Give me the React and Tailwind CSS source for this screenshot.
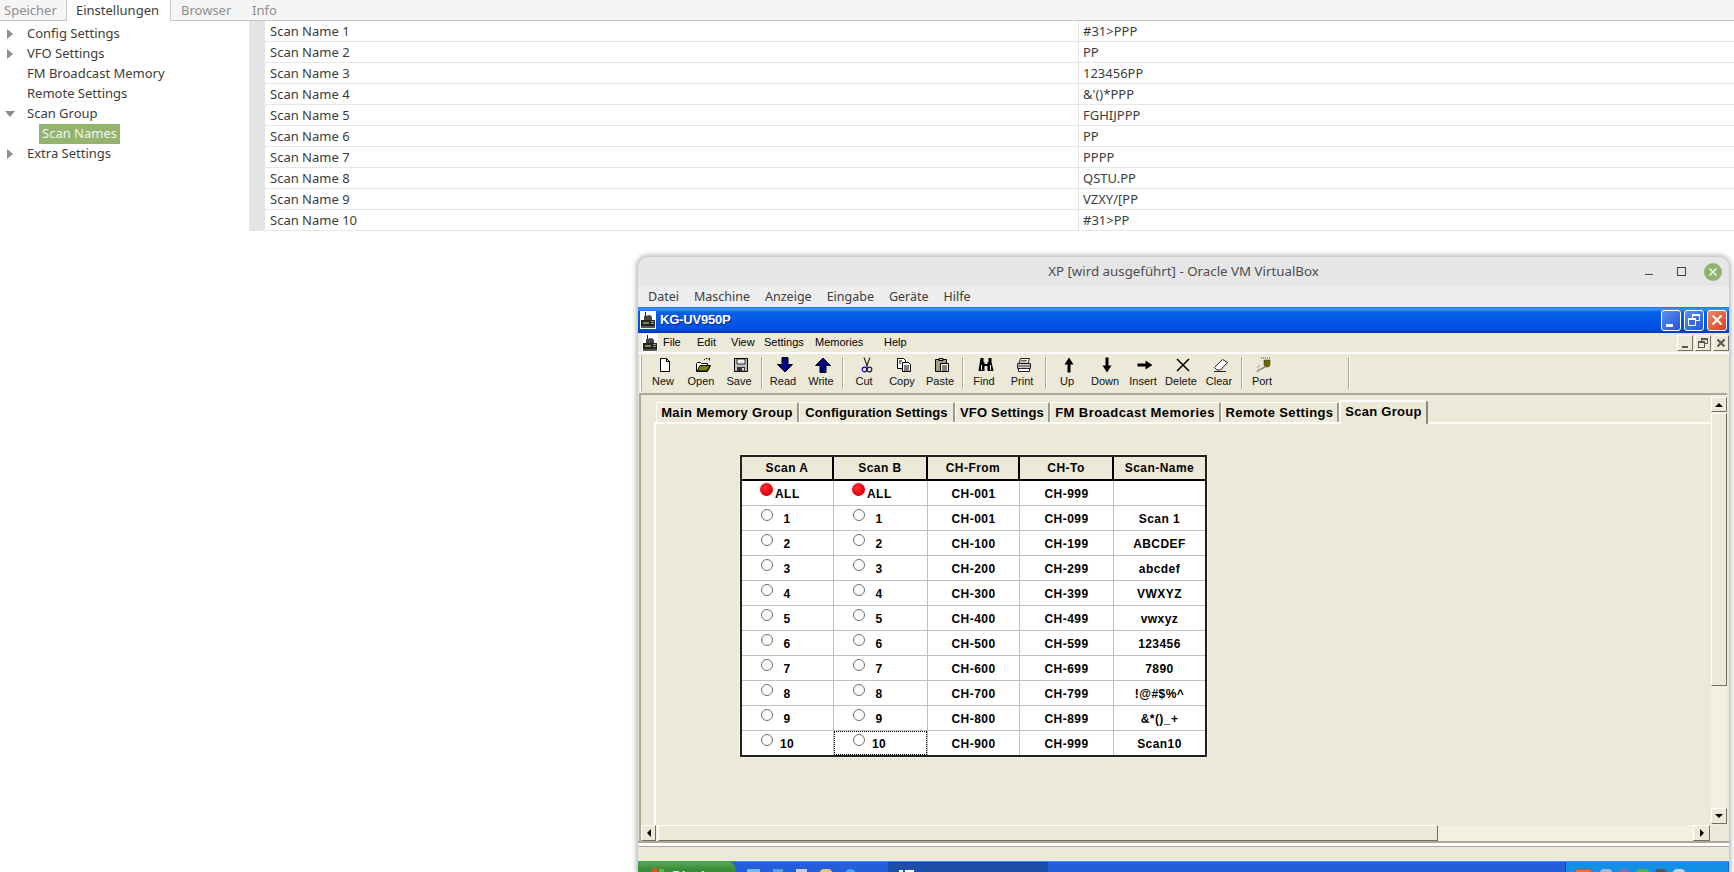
import React from "react";

const UI = "[font-family:'Noto_Sans',sans-serif]";
const XP = "[font-family:'Liberation_Sans',Arial,sans-serif]";

const Logo = () => (
  <svg width="16" height="18" viewBox="0 0 16 18" className="block bg-white">
    <path d="M5 1h1v4H5z" fill="#222" />
    <path d="M4 5l6-1 2 2v3H4z" fill="#444" />
    <path d="M1 9h14v6H1z" fill="#222" />
    <path d="M3 11h6v2H3z" fill="#7f8a3a" />
    <path d="M11 10h3v1h-3zM11 12h3v1h-3z" fill="#999" />
    <path d="M1 15h14v2H1z" fill="#555" />
  </svg>
);

const Icon = ({ children }) => (
  <svg width="18" height="16" viewBox="0 0 18 16" className="block ml-[3px]">
    {children}
  </svg>
);

const icons = {
  New: (
    <Icon>
      <path d="M4.5 1.5h6l3 3v10h-9z" fill="#fff" stroke="#000" />
      <path d="M10.5 1.5v3h3" fill="none" stroke="#000" />
    </Icon>
  ),
  Open: (
    <Icon>
      <path d="M2.5 6.5v8h11l3-6h-3v-2h-6l-1-1h-3z" fill="#fff" stroke="#000" />
      <path d="M3 14l3-5.500h10l-3 5.500z" fill="#808000" stroke="#000" />
      <path d="M10 3l2-1.500h2l1.500 1.500M15.500 1v3" fill="none" stroke="#000" strokeDasharray="1.500 1" />
    </Icon>
  ),
  Save: (
    <Icon>
      <path d="M2.500 1.500h13v13h-13z" fill="#c0c0c0" stroke="#000" />
      <path d="M5 2h8v5H5z" fill="#efefef" stroke="#000" strokeWidth="0.800" />
      <path d="M5 10h8v4.500H5z" fill="#333" />
      <path d="M10 11h2v2.500h-2z" fill="#ddd" />
    </Icon>
  ),
  Read: (
    <Icon>
      <path d="M6 0.500h6v7h4.500L9 15 1.500 7.500H6z" fill="#000080" stroke="#000" />
    </Icon>
  ),
  Write: (
    <Icon>
      <path d="M6 15.500h6v-7h4.500L9 1 1.500 8.500H6z" fill="#000080" stroke="#000" />
    </Icon>
  ),
  Cut: (
    <Icon>
      <path d="M7 0.500l3.500 9M13 0.500l-3.500 9" stroke="#000" fill="none" />
      <circle cx="7.500" cy="12.500" r="2.300" fill="none" stroke="#0000c0" strokeWidth="1.200" />
      <circle cx="12.500" cy="12.500" r="2.300" fill="none" stroke="#222" strokeWidth="1.200" />
    </Icon>
  ),
  Copy: (
    <Icon>
      <path d="M2.500 1.500h6l2 2v8h-8z" fill="#fff" stroke="#000" />
      <path d="M7.500 5.500h6l2 2v7h-8z" fill="#fff" stroke="#000" />
      <path d="M4 4h3M4 6h2M9 9h5M9 11h5M9 13h5" stroke="#000" />
    </Icon>
  ),
  Paste: (
    <Icon>
      <path d="M2.500 2.500h11v12h-11z" fill="#a0a080" stroke="#000" />
      <path d="M6 1.500h4v2H6z" fill="#c0c0c0" stroke="#000" />
      <path d="M7.500 6.500h8v8h-8z" fill="#fff" stroke="#000" />
      <path d="M9 9h5M9 11h5M9 13h5" stroke="#000" />
    </Icon>
  ),
  Find: (
    <Icon>
      <path d="M3.500 1h3v4h1v2h3V5h1V1h3v4l2 9h-6V9h-3v5H1.500z" fill="#000" />
      <path d="M4 8h1v5H4zM13 8h1v5h-1z" fill="#fff" />
    </Icon>
  ),
  Print: (
    <Icon>
      <path d="M5.500 1.500h9l-1.500 5h-9z" fill="#fff" stroke="#222" />
      <path d="M6 3.500h6M5.500 5h6" stroke="#666" />
      <path d="M2.500 6.500h13v5h-13z" fill="#c8c8c8" stroke="#222" />
      <path d="M3.500 11.500h11v3h-11z" fill="#fff" stroke="#222" />
      <path d="M3 9h12" stroke="#444" />
    </Icon>
  ),
  Up: (
    <Icon>
      <path d="M9 0.500l4.500 7H10.500v8h-3v-8H4.500z" fill="#000" />
    </Icon>
  ),
  Down: (
    <Icon>
      <path d="M9 15.500l4.500-7H10.500v-8h-3v8H4.500z" fill="#000" />
    </Icon>
  ),
  Insert: (
    <Icon>
      <path d="M16.500 8l-7-4.500V6.500H1.500v3h8v3z" fill="#000" />
    </Icon>
  ),
  Delete: (
    <Icon>
      <path d="M3 2l12 12M15 2L3 14" stroke="#000" strokeWidth="1.500" fill="none" />
    </Icon>
  ),
  Clear: (
    <Icon>
      <path d="M2.500 10.500l8-8 5 3-7 7.500H5z" fill="#fff" stroke="#222" />
      <path d="M2 14.500h12" stroke="#222" />
    </Icon>
  ),
  Port: (
    <Icon>
      <path d="M6 1h10" stroke="#999" strokeDasharray="1 1" strokeWidth="2" />
      <path d="M9 3h6v5l-1.500 2h-3L9 8z" fill="#6b6b00" stroke="#333" strokeWidth="0.500" />
      <path d="M10 10L3 13.500l-1 1.500" stroke="#888" strokeWidth="1.500" fill="none" />
      <path d="M5 8L2 11" stroke="#bbb" strokeWidth="1.500" />
    </Icon>
  ),
};

const toolbar = [
  { items: ["New", "Open", "Save"], sep: "ml-[3px] mr-[2px]" },
  { items: ["Read", "Write"], sep: "ml-[2px] mr-[2px]" },
  { items: ["Cut", "Copy", "Paste"], sep: "ml-[3px] mr-[2px]" },
  { items: ["Find", "Print"], sep: "ml-[4px] mr-[2px]" },
  { items: ["Up", "Down", "Insert", "Delete", "Clear"], sep: "ml-[3px] mr-[1px]" },
  { items: ["Port"], sep: "ml-[67px]" },
];

const sideRows = [
  ["r", "Config Settings"],
  ["r", "VFO Settings"],
  ["", "FM Broadcast Memory"],
  ["", "Remote Settings"],
  ["d", "Scan Group"],
  ["s", "Scan Names"],
  ["r", "Extra Settings"],
];

const scanValues = ["#31>PPP", "PP", "123456PP", "&'()*PPP", "FGHIJPPP", "PP", "PPPP", "QSTU.PP", "VZXY/[PP", "#31>PP"];

const scanRows = [
  ["ALL", "CH-001", "CH-999", ""],
  ["1", "CH-001", "CH-099", "Scan 1"],
  ["2", "CH-100", "CH-199", "ABCDEF"],
  ["3", "CH-200", "CH-299", "abcdef"],
  ["4", "CH-300", "CH-399", "VWXYZ"],
  ["5", "CH-400", "CH-499", "vwxyz"],
  ["6", "CH-500", "CH-599", "123456"],
  ["7", "CH-600", "CH-699", "7890"],
  ["8", "CH-700", "CH-799", "!@#$%^"],
  ["9", "CH-800", "CH-899", "&*()_+"],
  ["10", "CH-900", "CH-999", "Scan10"],
];

const classicBtn = "bg-[#ece9d8] border border-t-white border-l-white border-r-[#716f64] border-b-[#716f64]";

const Radio = ({ on }) =>
  on ? (
    <span className="mt-[2px] ml-[18px] w-[13px] h-[13px] shrink-0 rounded-full bg-[radial-gradient(circle_at_40%_35%,#ff3030,#dd0010_65%,#a8000c)]" />
  ) : (
    <span className="mt-[3px] ml-[19px] w-[12px] h-[12px] shrink-0 rounded-full border border-[#6f6f6f] bg-[#fbfbf8]" />
  );

const ScanCell = ({ row, last, focus }) => (
  <div className={`relative flex ${last ? "h-[24px]" : "h-[25px] border-b border-b-[#c0c0c0]"} border-r border-r-[#c0c0c0]`}>
    <Radio on={row[0] === "ALL"} />
    <span className="self-center pt-px w-[24px] ml-[2px] text-center whitespace-nowrap">{row[0]}</span>
    {focus && <span className="absolute inset-0 border border-dotted border-black" />}
  </div>
);

const TextCell = ({ text, last, end }) => (
  <div className={`flex items-center justify-center pt-px ${last ? "h-[24px]" : "h-[25px] border-b border-b-[#c0c0c0]"} ${end ? "" : "border-r border-r-[#c0c0c0]"}`}>
    {text}
  </div>
);

const tabs = [
  ["Main Memory Group", "w-[143px] tracking-[0.35px]"],
  ["Configuration Settings", "w-[156px] tracking-[0.1px]"],
  ["VFO Settings", "w-[95px] tracking-[0.2px]"],
  ["FM Broadcast Memories", "w-[171px] tracking-[0.45px]"],
  ["Remote Settings", "w-[118px] tracking-[0.35px]"],
];

export default function App() {
  return (
    <div className={`relative w-[1734px] h-[872px] overflow-hidden bg-white ${UI}`}>
      {/* background application */}
      <div className="flex flex-col">
        <div className="flex h-[21px] bg-[#f5f5f5] border-b border-b-[#c6c6c6] text-[13px] leading-[20px] text-[#8e8e8e]">
          <span className="ml-[4px] w-[62px]">Speicher</span>
          <span className="w-[105px] h-[21px] pl-[9px] bg-white border-x border-x-[#c6c6c6] text-[#3c3c3c]">Einstellungen</span>
          <span className="ml-[10px] w-[71px]">Browser</span>
          <span>Info</span>
        </div>
        <div className="flex">
          <div className="w-[249px] flex flex-col pt-[3px] text-[13px] text-[#3c3c3c]">
            {sideRows.map(([k, label]) => (
              <div key={label} className="flex items-center h-[20px]">
                {k === "r" && <span className="ml-[7px] w-0 h-0 border-y-[5px] border-y-transparent border-l-[6px] border-l-[#8c8c8c]" />}
                {k === "d" && <span className="ml-[5px] w-0 h-0 border-x-[5px] border-x-transparent border-t-[6px] border-t-[#8c8c8c]" />}
                {k === "" && <span className="ml-[13px]" />}
                {k === "s" ? (
                  <span className="ml-[39px] h-[20px] leading-[19px] px-[3px] bg-[#93b36e] text-[#f2f6ec]">{label}</span>
                ) : (
                  <span className={k === "d" ? "ml-[12px]" : "ml-[14px]"}>{label}</span>
                )}
              </div>
            ))}
          </div>
          <div className="flex-1 border-l-[16px] border-l-[#e4e4e4] text-[13px] text-[#3c3c3c]">
            {scanValues.map((v, i) => (
              <div key={i} className="grid grid-cols-[814px_1fr] h-[21px] leading-[20px] border-b border-b-[#e6e6e6]">
                <span className="pl-[5px] border-r border-r-[#e6e6e6]">Scan Name {i + 1}</span>
                <span className="pl-[4px]">{v}</span>
              </div>
            ))}
          </div>
        </div>
      </div>

      {/* VirtualBox window */}
      <div className="absolute left-[638px] top-[257px] w-[1091px] h-[615px] flex flex-col rounded-t-[10px] overflow-hidden bg-[#e6e6e6] shadow-[0_0_5px_2px_rgba(0,0,0,0.28)]">
        <div className="grid grid-cols-[1fr_auto_1fr] items-center h-[29px] shrink-0 text-[13.3px] text-[#4d4d4d]">
          <span />
          <span>XP [wird ausgeführt] - Oracle VM VirtualBox</span>
          <div className="flex justify-end items-center text-[#444]">
            <span className="w-[32px] flex justify-center"><span className="w-[8px] h-px mt-[6px] bg-[#444]" /></span>
            <span className="w-[32px] flex justify-center"><span className="w-[9px] h-[9px] border border-[#444]" /></span>
            <span className="w-[32px] flex justify-center">
              <span className="w-[18px] h-[18px] rounded-full bg-[#8fb26e] flex items-center justify-center">
                <svg width="10" height="10" viewBox="0 0 10 10"><path d="M1.500 1.500l7 7M8.500 1.500l-7 7" stroke="#fff" strokeWidth="1.300" /></svg>
              </span>
            </span>
          </div>
        </div>
        <div className="flex items-center h-[21px] pt-px shrink-0 pl-[3px] bg-[#eeeeee] text-[12.5px] text-[#3c3c3c]">
          {["Datei", "Maschine", "Anzeige", "Eingabe", "Geräte", "Hilfe"].map((m) => (
            <span key={m} className="px-[7px] mr-px">{m}</span>
          ))}
        </div>

        {/* XP caption */}
        <div className={`flex items-center h-[26px] shrink-0 pl-[2px] pr-[2px] bg-[linear-gradient(#1f6ff0_0%,#3d95ff_8%,#0a5fe8_20%,#0055e5_60%,#0050dd_85%,#0034b8_100%)] ${XP}`}>
          <Logo />
          <span className="ml-[4px] text-[13px] font-bold tracking-[-0.2px] text-white [text-shadow:1px_1px_0_#0a2a8a]">KG-UV950P</span>
          <div className="ml-auto flex gap-[3px]">
            <span className="relative w-[20px] h-[21px] rounded-[3px] border border-white bg-[linear-gradient(135deg,#5a8ff0,#2456d8)]">
              <span className="absolute left-[4px] bottom-[3px] w-[7px] h-[3px] bg-white" />
            </span>
            <span className="relative w-[20px] h-[21px] rounded-[3px] border border-white bg-[linear-gradient(135deg,#5a8ff0,#2456d8)]">
              <span className="absolute left-[7px] top-[3px] w-[8px] h-[7px] border border-white border-t-2" />
              <span className="absolute left-[3px] top-[7px] w-[8px] h-[8px] border border-white border-t-2 bg-[#3a6ae0]" />
            </span>
            <span className="flex items-center justify-center w-[20px] h-[21px] rounded-[3px] border border-white bg-[linear-gradient(135deg,#ee8a68,#d8411c)]">
              <svg width="12" height="12" viewBox="0 0 12 12"><path d="M1.500 1.500l9 9M10.500 1.500l-9 9" stroke="#fff" strokeWidth="2" /></svg>
            </span>
          </div>
        </div>

        {/* XP body */}
        <div className={`flex-1 flex flex-col bg-[#ece9d8] ${XP} text-black`}>
          <div className="flex items-center h-[19px] shrink-0 pl-[4px] text-[11px]">
            <Logo />
            <span className="ml-[5px] w-[34px]">File</span>
            <span className="w-[34px]">Edit</span>
            <span className="w-[33px]">View</span>
            <span className="w-[51px]">Settings</span>
            <span className="w-[69px]">Memories</span>
            <span>Help</span>
            <div className="ml-auto flex gap-[2px] text-[#555]">
              <span className={`relative w-[16px] h-[16px] ${classicBtn}`}><span className="absolute left-[4px] bottom-[2px] w-[6px] h-[2px] bg-[#555]" /></span>
              <span className={`relative w-[16px] h-[16px] ${classicBtn}`}>
                <span className="absolute left-[5px] top-[2px] w-[7px] h-[6px] border border-[#555] border-t-2" />
                <span className="absolute left-[2px] top-[5px] w-[7px] h-[7px] border border-[#555] border-t-2 bg-[#ece9d8]" />
              </span>
              <span className={`flex items-center justify-center w-[16px] h-[16px] ${classicBtn}`}>
                <svg width="10" height="10" viewBox="0 0 10 10"><path d="M1.500 1.500l7 7M8.500 1.500l-7 7" stroke="#555" strokeWidth="2" /></svg>
              </span>
            </div>
          </div>
          <div className="h-[2px] shrink-0 bg-white" />

          {/* toolbar */}
          <div className="flex h-[39px] shrink-0 pl-[2px] text-[11px] text-[#111]">
            <span className="w-[2px] mt-[2px] h-[35px] border-l border-l-white border-r border-r-[#aca899]" />
            <span className="w-[2px]" />
            {toolbar.map((g, i) => (
              <React.Fragment key={i}>
                {g.items.map((it) => (
                  <div key={it} className="w-[38px] pt-[3px] flex flex-col items-center">
                    {icons[it]}
                    <span className="mt-px leading-[15px] whitespace-nowrap">{it}</span>
                  </div>
                ))}
                <span className={`w-px h-[32px] mt-[3px] bg-[#aca899] shadow-[1px_0_0_#fff] ${g.sep}`} />
              </React.Fragment>
            ))}
          </div>

          {/* MDI client */}
          <div className="flex-1 min-h-0 flex flex-col ml-[1px] mr-[2px] border-t-2 border-t-[#aca899] border-l-2 border-l-[#aca899]">
            <div className="flex-1 min-h-0 flex">
              <div className="flex-1 flex flex-col">
                <div className="flex items-end h-[27px] shrink-0 pl-[15px] text-[13px] font-bold">
                  {tabs.map(([t, w]) => (
                    <div key={t} className={`${w} h-[20px] leading-[20px] text-center whitespace-nowrap rounded-t-[2px] border-t border-t-white border-l border-l-white border-r-2 border-r-[#9c9a8c]`}>{t}</div>
                  ))}
                  <div className="relative -mb-[2px] w-[89px] h-[24px] leading-[20px] text-center tracking-[0.3px] rounded-t-[3px] border-t-2 border-t-white border-l-2 border-l-white border-r-2 border-r-[#8c8a7c] bg-[#ece9d8] z-10">Scan Group</div>
                </div>
                <div className="flex-1 ml-[13px] border-t-2 border-t-white border-l-2 border-l-white pl-[84px] pt-[31px]">
                  <div className="w-[467px] h-[302px] border-2 border-[#202020] bg-white shadow-[0_0_0_1px_#f6f4ea] text-[12px] font-bold tracking-[0.45px] grid grid-cols-[92px_94px_92px_94px_91px] content-start">
                    {["Scan A", "Scan B", "CH-From", "CH-To", "Scan-Name"].map((h, i) => (
                      <div key={h} className={`flex items-center justify-center h-[24px] bg-[#ece9d8] border-b-2 border-b-black ${i < 4 ? "border-r-2 border-r-black" : ""}`}>{h}</div>
                    ))}
                    {scanRows.map((r, i) => {
                      const last = i === scanRows.length - 1;
                      return (
                        <React.Fragment key={i}>
                          <ScanCell row={r} last={last} />
                          <ScanCell row={r} last={last} focus={last} />
                          <TextCell text={r[1]} last={last} />
                          <TextCell text={r[2]} last={last} />
                          <TextCell text={r[3]} last={last} end />
                        </React.Fragment>
                      );
                    })}
                  </div>
                </div>
              </div>
              {/* vertical scrollbar */}
              <div className="w-[16px] shrink-0 flex flex-col pt-[2px] pb-px bg-[repeating-conic-gradient(#f7f5ec_0_25%,#ece9d8_0_50%)] bg-[length:2px_2px] text-black">
                <span className={`flex items-center justify-center h-[15px] ${classicBtn}`}><span className="w-0 h-0 border-x-[4px] border-x-transparent border-b-[4px] border-b-black" /></span>
                <span className={`h-[273px] mt-px ${classicBtn}`} />
                <span className="flex-1" />
                <span className={`flex items-center justify-center h-[16px] ${classicBtn}`}><span className="w-0 h-0 border-x-[4px] border-x-transparent border-t-[4px] border-t-black" /></span>
              </div>
            </div>
            {/* horizontal scrollbar */}
            <div className="flex h-[16px] shrink-0 mr-[17px] bg-[repeating-conic-gradient(#f7f5ec_0_25%,#ece9d8_0_50%)] bg-[length:2px_2px]">
              <span className={`flex items-center justify-center w-[15px] ${classicBtn}`}><span className="w-0 h-0 border-y-[4px] border-y-transparent border-r-[4px] border-r-black" /></span>
              <span className={`w-[780px] ml-[2px] ${classicBtn}`} />
              <span className="flex-1" />
              <span className={`flex items-center justify-center w-[17px] ${classicBtn}`}><span className="w-0 h-0 border-y-[4px] border-y-transparent border-l-[4px] border-l-black" /></span>
            </div>
          </div>
          <div className="h-[6px] shrink-0 border-t-2 border-t-[#aca899] border-b border-b-[#aca899] bg-white" />
          <div className="h-[14px] shrink-0" />
        </div>

        {/* XP taskbar */}
        <div className={`flex h-[11px] shrink-0 overflow-hidden border-t border-t-[#3f8cf3] bg-[#245edb] ${XP}`}>
          <div className="flex items-start w-[98px] h-[24px] pl-[14px] pt-[6px] rounded-tr-[8px] bg-[linear-gradient(#5aa85a,#388e38_30%,#3c963c)]">
            <span className="w-[5px] h-[6px] mr-[2px] bg-[#e8501c] rounded-tl-[3px]" />
            <span className="w-[5px] h-[6px] mr-[6px] mt-[1px] bg-[#6cb83c]" />
            <span className="text-[15px] leading-[15px] font-bold italic text-white">Start</span>
          </div>
          <div className="flex items-start pt-[7px] gap-[13px] pl-[11px] w-[152px]">
            <span className="w-[13px] h-[6px] bg-[#7fb8ee]" />
            <span className="w-[10px] h-[6px] bg-[#5a9fe0]" />
            <span className="w-[11px] h-[6px] bg-[#c8cfd8]" />
            <span className="w-[12px] h-[6px] rounded-t bg-[#e6c878]" />
            <span className="w-[11px] h-[6px] rounded-t-full bg-[#4ca8e8]" />
            <span className="text-[12px] leading-[10px] text-[#cfe0ff]">»</span>
          </div>
          <div className="w-[160px] pl-[11px] pt-[7px] rounded-t-[3px] bg-[#1e4fa8] border-t border-t-[#16408e]">
            <span className="flex gap-[2px]"><span className="w-[4px] h-[5px] bg-white" /><span className="w-[9px] h-[5px] bg-white" /></span>
          </div>
          <div className="ml-auto w-[163px] mr-px flex items-start pt-[7px] pl-[10px] gap-[6px] bg-[#138fe6] border-l border-l-[#0c3c90]">
            <span className="w-[15px] h-[4px] bg-[#e0783a] border-t border-t-[#c05a20]" />
            <span className="ml-[3px] w-[12px] h-[4px] rounded-t-full bg-[#b8b0c8]" />
            <span className="w-[12px] h-[4px] rounded-t-full bg-[#8a6aa8]" />
            <span className="w-[13px] h-[4px] rounded-t-full bg-[#5ab04a]" />
            <span className="w-[12px] h-[4px] rounded-t-full bg-[#555]" />
            <span className="w-[12px] h-[4px] rounded-t-full bg-[#c8d0d8]" />
          </div>
        </div>
      </div>
    </div>
  );
}
